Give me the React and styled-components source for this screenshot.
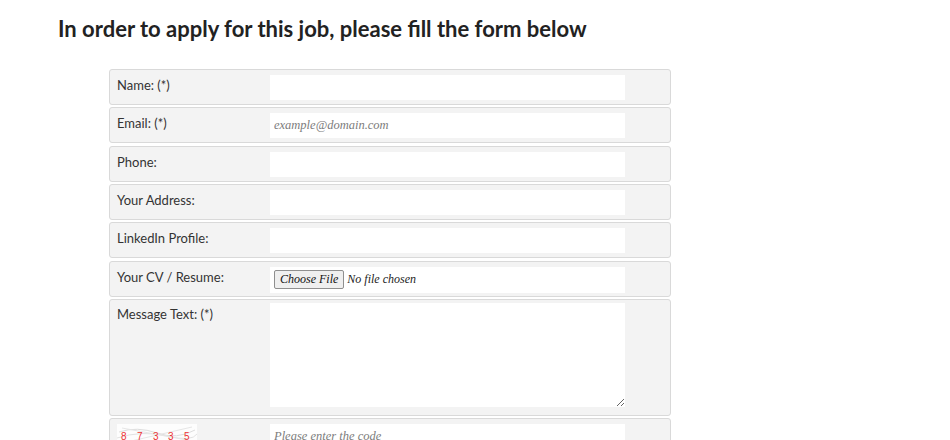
import React from "react";
import styled, { createGlobalStyle } from "styled-components";

const Global = createGlobalStyle`
  html, body { margin: 0; padding: 0; background: #fff; }
  body { font-family: Lato, "Open Sans", sans-serif; color: #333; }
`;

const Page = styled.div`
  padding: 14px 0 0 58px;
  width: 892px;
  height: 426px;
  overflow: hidden;
`;

const Title = styled.h2`
  margin: 0 0 26px;
  font-family: Lato, sans-serif;
  font-weight: 700;
  font-size: 22px;
  line-height: 29px;
  color: #222;
`;

const Form = styled.div`
  margin-left: 51px;
  width: 562px;
  display: flex;
  flex-direction: column;
  gap: 2.33px;
`;

const Row = styled.div`
  box-sizing: border-box;
  height: ${(p) => p.$h || 36}px;
  border: 1px solid #d9d9d9;
  border-radius: 3px;
  background: #f3f3f3;
  display: grid;
  grid-template-columns: 153px 355px;
  align-items: start;
  padding: ${(p) => p.$pt ?? 5}px 0 0 7px;
`;

const Label = styled.label`
  font-size: 13px;
  line-height: 16px;
  color: #333;
  padding-top: ${(p) => p.$pt ?? 2}px;
`;

const Input = styled.input`
  box-sizing: border-box;
  width: 355px;
  height: 25px;
  border: none;
  outline: none;
  background: #fff;
  padding: 0 4px;
  font-family: "Liberation Serif", serif;
  font-style: italic;
  font-size: 12.5px;
  color: #333;
  &::placeholder { color: #7c7c7c; }
`;

const FileBox = styled.div`
  box-sizing: border-box;
  width: 355px;
  height: 26px;
  background: #fff;
  display: flex;
  align-items: center;
  padding-left: 4px;
  gap: 3px;
  font-family: "Liberation Serif", serif;
  font-style: italic;
  font-size: 12px;
  color: #222;
`;

const FileButton = styled.span`
  box-sizing: border-box;
  height: 19px;
  display: inline-flex;
  align-items: center;
  padding: 0 5px;
  border: 1px solid #8f8f8f;
  border-radius: 2px;
  background: #efefef;
  color: #111;
`;

const TextArea = styled.textarea`
  box-sizing: border-box;
  width: 355px;
  height: 104px;
  border: none;
  outline: none;
  background: #fff;
  resize: vertical;
  margin: 0;
`;

const Captcha = styled.div`
  width: 80px;
  height: 20px;
  margin-top: 0;
`;

const fields = [
  { label: "Name: (*)" },
  { label: "Email: (*)", placeholder: "example@domain.com" },
  { label: "Phone:" },
  { label: "Your Address:" },
  { label: "LinkedIn Profile:" },
];

export default function App() {
  return (
    <>
      <Global />
      <Page>
        <Title>In order to apply for this job, please fill the form below</Title>
        <Form>
          {fields.map((f) => (
            <Row key={f.label}>
              <Label>{f.label}</Label>
              <Input placeholder={f.placeholder || ""} />
            </Row>
          ))}
          <Row>
            <Label>Your CV / Resume:</Label>
            <FileBox>
              <FileButton>Choose File</FileButton>
              <span>No file chosen</span>
            </FileBox>
          </Row>
          <Row $h={117} $pt={3}>
            <Label $pt={3}>Message Text: (*)</Label>
            <TextArea />
          </Row>
          <Row $pt={5}>
            <Captcha>
              <svg width="80" height="20" viewBox="0 0 80 20">
                <rect width="80" height="20" fill="#fdfdfd" />
                <path d="M2 8 Q20 2 40 9 T78 6" stroke="#ddd" fill="none" />
                <path d="M0 14 Q25 6 50 12 T80 10" stroke="#e2e2e2" fill="none" />
                <path d="M5 4 L70 16" stroke="#e6e6e6" fill="none" />
                <path d="M10 18 L75 3" stroke="#e6e6e6" fill="none" />
                <g fill="#e33" fontFamily="Liberation Sans, sans-serif" fontSize="10">
                  <text x="4" y="16">8</text>
                  <text x="20" y="16">7</text>
                  <text x="36" y="16">3</text>
                  <text x="51" y="16">3</text>
                  <text x="67" y="16">5</text>
                </g>
              </svg>
            </Captcha>
            <Input placeholder="Please enter the code" />
          </Row>
        </Form>
      </Page>
    </>
  );
}
